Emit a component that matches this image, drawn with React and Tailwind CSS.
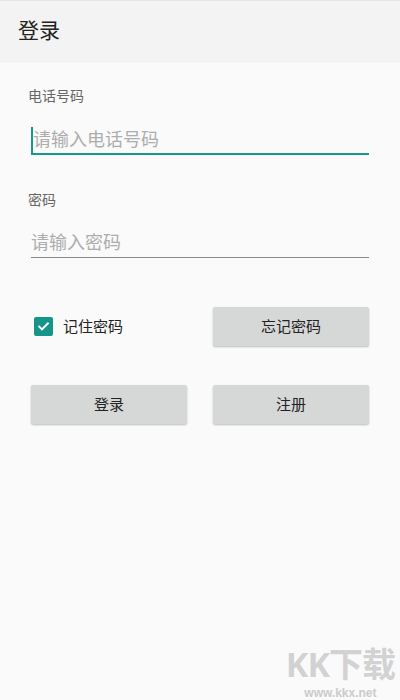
import React from "react";

const font = { fontFamily: '"Noto Sans", "Noto Sans CJK SC", sans-serif' };

function Btn({ children }) {
  return (
    <button className="h-[39px] w-[156px] rounded-[2px] bg-[#d6d7d7] text-[15px] text-[#222] shadow-[0_1px_2px_rgba(0,0,0,0.25)]">
      {children}
    </button>
  );
}

export default function App() {
  return (
    <div className="relative h-[700px] w-[400px] overflow-hidden bg-[#fafafa]" style={font}>
      <div className="flex h-[61px] items-center border-t border-[#e6e6e6] bg-[#f3f3f3] pl-[18px] shadow-[0_1px_1px_rgba(0,0,0,0.04)]">
        <span className="text-[21px] text-[#222]">登录</span>
      </div>

      <div className="flex flex-col px-[31px]">
        <div className="mt-[25px] -ml-[3px] text-[14px] leading-[20px] text-[#666]">电话号码</div>
        <div className="mt-[20px] flex h-[29px] items-center border-b-2 border-[#159a8a]">
          <div className="h-[26px] w-[2px] bg-[#159a8a]" />
          <span className="-mt-[1px] text-[18px] text-[#adadad]">请输入电话号码</span>
        </div>

        <div className="mt-[35px] -ml-[3px] text-[14px] leading-[20px] text-[#666]">密码</div>
        <div className="mt-[18px] flex h-[30px] items-center border-b border-[#8a8a8a]">
          <span className="text-[18px] text-[#adadad]">请输入密码</span>
        </div>

        <div className="mt-[49px] flex items-center justify-between">
          <div className="flex items-center">
            <div className="ml-[3px] flex h-[19px] w-[19px] items-center justify-center rounded-[2px] bg-[#15958a]">
              <svg width="15" height="15" viewBox="0 0 24 24" fill="none" stroke="white" strokeWidth="3" strokeLinecap="square">
                <path d="M5 12l4.5 4.5L19 7" />
              </svg>
            </div>
            <span className="ml-[10px] text-[15px] text-[#222]">记住密码</span>
          </div>
          <Btn>忘记密码</Btn>
        </div>

        <div className="mt-[39px] flex items-center justify-between">
          <Btn>登录</Btn>
          <Btn>注册</Btn>
        </div>
      </div>

      <div className="absolute bottom-[1px] right-[5px] flex flex-col items-center">
        <span className="text-[34px] font-bold leading-[34px] tracking-[-1px] text-[#d2d2d2]" style={{ textShadow: "0 0 2px #fff" }}>
          KK下载
        </span>
        <span className="mt-[6px] text-[12px] font-bold leading-[12px] text-[#cbcbcb]" style={{ fontFamily: '"Liberation Sans", sans-serif' }}>
          www.kkx.net
        </span>
      </div>
    </div>
  );
}
